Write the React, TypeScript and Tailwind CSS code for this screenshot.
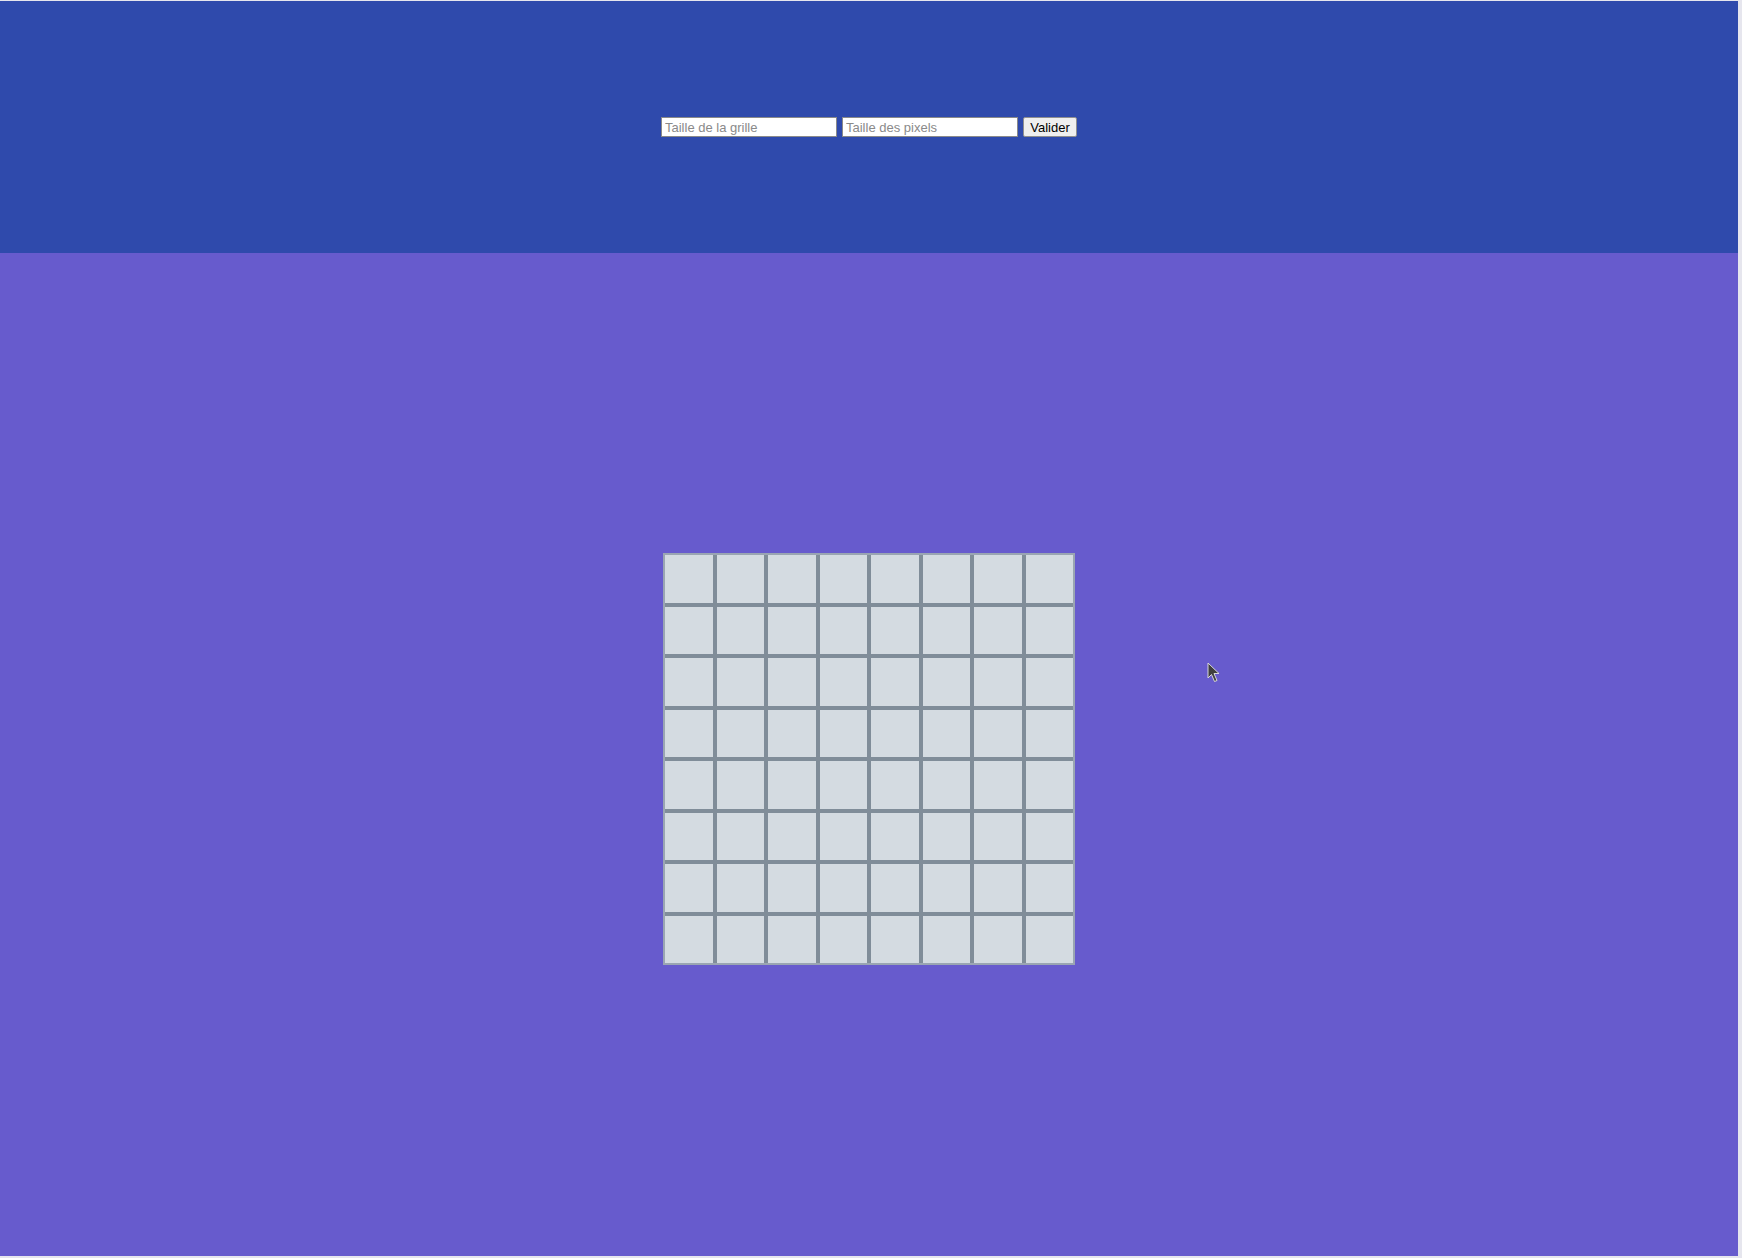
const SIZE = 8;

export default function App() {
  const cells = Array.from({ length: SIZE * SIZE });

  return (
    <div className="w-full h-[1258px] bg-[#e6e6ee] overflow-hidden" style={{ fontFamily: '"Liberation Sans", Arial, sans-serif' }}>
      <div className="relative w-[1738px] h-[1255px] mt-px flex flex-col">
        {/* Header with the form */}
        <header className="h-[252px] shrink-0 bg-[#2f4aac] flex items-center justify-center">
          <form className="flex items-center gap-[5px]" onSubmit={(e) => e.preventDefault()}>
            <input
              type="text"
              placeholder="Taille de la grille"
              className="w-[176px] h-[20px] bg-white border border-[#8a8a8a] px-[3px] text-[13px] text-black placeholder:text-[#8a8a8a] outline-none"
            />
            <input
              type="text"
              placeholder="Taille des pixels"
              className="w-[176px] h-[20px] bg-white border border-[#8a8a8a] px-[3px] text-[13px] text-black placeholder:text-[#8a8a8a] outline-none"
            />
            <button
              type="submit"
              className="w-[54px] h-[20px] bg-[#efefef] border border-[#8f8f8f] rounded-[2px] text-[13px] text-black leading-none"
            >
              Valider
            </button>
          </form>
        </header>

        {/* Drawing area */}
        <main className="flex-1 bg-[#675bcd] flex items-center justify-center pt-[9px]">
          <div className="grid grid-cols-[repeat(8,47.5px)] auto-rows-[47.5px] gap-1 bg-[#808d99] border-2 border-[#9aa5b2]">
            {cells.map((_, i) => (
              <div key={i} className="bg-[#d4dbe1]" />
            ))}
          </div>
        </main>

        {/* mouse pointer */}
        <svg className="absolute left-[1207px] top-[661px]" width="14" height="22" viewBox="0 0 14 22">
          <path d="M1 1 L1 16 L4.5 12.5 L7.5 19.5 L10 18.5 L7 11.5 L12 11.5 Z" fill="#3f3f3f" stroke="#d8d8d8" strokeWidth="1" strokeLinejoin="round" />
        </svg>
      </div>
    </div>
  );
}
